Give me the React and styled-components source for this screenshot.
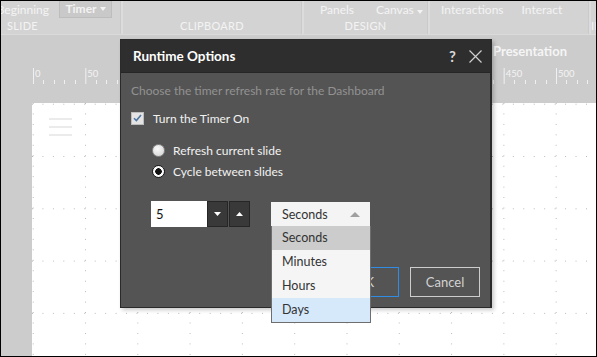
import React from 'react';
import styled, { createGlobalStyle } from 'styled-components';

const GlobalStyle = createGlobalStyle`
  html, body {
    margin: 0;
    padding: 0;
  }
  body {
    font-family: Lato, "Open Sans", sans-serif;
    background: #fff;
  }
`;

const Screen = styled.div`
  position: relative;
  width: 597px;
  height: 357px;
  box-sizing: border-box;
  border: 1px solid #000;
  overflow: hidden;
  display: flex;
  flex-direction: column;
  background: #cccccc;
`;

/* ---------- ribbon ---------- */

const Ribbon = styled.div`
  flex: none;
  height: 33px;
  display: flex;
  background: #d3d3d3;
  border-bottom: 1px solid #dadada;
  color: #f3f3f3;
  font-size: 12px;
`;

const Group = styled.div`
  flex: none;
  width: ${(p) => p.$w}px;
  margin-left: ${(p) => p.$ml || 0}px;
  display: flex;
  flex-direction: column;
`;

const Items = styled.div`
  height: 17px;
  display: flex;
  align-items: center;
  justify-content: ${(p) => p.$justify || 'flex-start'};
  gap: ${(p) => p.$gap || 0}px;
  padding: ${(p) => p.$pad || '0'};
  white-space: nowrap;
`;

const GroupLabel = styled.div`
  height: 16px;
  line-height: 16px;
  font-size: 11px;
  letter-spacing: 0.3px;
  text-align: ${(p) => p.$align || 'center'};
  white-space: nowrap;
`;

const Sep = styled.div`
  flex: none;
  width: 3px;
  background: linear-gradient(to right, #cacaca 1px, #dcdcdc 1px);
`;

const TimerButton = styled.div`
  width: 53px;
  height: 17px;
  box-sizing: border-box;
  margin-top: -1px;
  display: flex;
  align-items: center;
  justify-content: center;
  gap: 3px;
  background: #c9c9c9;
  border: 1px solid #bdbdbd;
  border-top: none;
  font-weight: 700;
`;

/* ---------- tab strip and ruler ---------- */

const TabStrip = styled.div`
  flex: none;
  height: 32px;
  display: flex;
  align-items: center;
  justify-content: flex-end;
  padding-right: 29px;
  color: #f5f5f5;
  font-size: 13px;
  font-weight: 700;
`;

const RulerBar = styled.div`
  flex: none;
  height: 34px;
`;

/* ---------- workspace ---------- */

const Workspace = styled.div`
  flex: 1;
  display: flex;
  padding-top: 2px;
`;

const Margin = styled.div`
  flex: none;
  width: 31px;
`;

const Canvas = styled.div`
  flex: 1;
  padding: 15px 0 0 17px;
  background-color: #fff;
  background-image:
    conic-gradient(from 270deg at 1px 1px, #b8b8b8 90deg, transparent 0),
    conic-gradient(from 270deg at 1px 1px, #b8b8b8 90deg, transparent 0);
  background-size: 10.46px 52.3px, 52.3px 10.46px;
  background-position: 0 53px, 53px 0;
`;

const Menu = styled.div`
  display: flex;
  flex-direction: column;
  gap: 6px;
`;

const MenuBar = styled.div`
  width: 23px;
  height: 2px;
  background: #ebebeb;
`;

/* ---------- dialog ---------- */

const Dialog = styled.div`
  position: absolute;
  left: 119px;
  top: 38px;
  width: 372px;
  height: 269px;
  box-sizing: border-box;
  border: 1px solid #2a2a2a;
  border-right-width: 2px;
  box-shadow: 2px 2px 4px rgba(0, 0, 0, 0.22);
  background: #545454;
  display: flex;
  flex-direction: column;
  z-index: 5;
`;

const TitleBar = styled.div`
  height: 32px;
  display: flex;
  align-items: center;
  padding: 0 8px 0 12px;
  background: #2e2e2e;
  border-bottom: 1px solid #262626;
`;

const Title = styled.div`
  flex: 1;
  color: #fff;
  font-size: 13.5px;
  font-weight: 700;
`;

const Help = styled.span`
  color: #d8d8d8;
  font-size: 15px;
  font-weight: 700;
  margin-right: 13px;
`;

const Body = styled.div`
  flex: 1;
  padding: 10px;
  display: flex;
  flex-direction: column;
  color: #f2f2f2;
  font-size: 12px;
`;

const Desc = styled.div`
  height: 16px;
  line-height: 16px;
  color: #929292;
`;

const CheckRow = styled.label`
  margin-top: 12px;
  height: 14px;
  display: flex;
  align-items: center;
  gap: 9px;
`;

const Box = styled.span`
  width: 13px;
  height: 13px;
  box-sizing: border-box;
  border: 1px solid #bdbdbd;
  background: #e4e4e4;
  display: flex;
  align-items: center;
  justify-content: center;
`;

const RadioGroup = styled.div`
  margin: 18px 0 0 21px;
  display: flex;
  flex-direction: column;
  gap: 7px;
`;

const RadioRow = styled.label`
  height: 14px;
  display: flex;
  align-items: center;
  gap: 8px;
`;

const Dot = styled.span`
  width: 13px;
  height: 13px;
  box-sizing: border-box;
  border-radius: 50%;
  border: 1px solid ${(p) => (p.$on ? '#1a1a1a' : '#8a8a8a')};
  background: ${(p) =>
    p.$on
      ? 'radial-gradient(circle, #111 0 3px, #fafafa 3.5px)'
      : 'radial-gradient(circle at 40% 35%, #fafafa, #cfcfcf)'};
`;

const ControlRow = styled.div`
  margin: 23px 0 0 20px;
  height: 26px;
  display: flex;
  align-items: flex-start;
  position: relative;
  z-index: 3;
`;

const NumberField = styled.div`
  width: 56px;
  height: 26px;
  box-sizing: border-box;
  background: #fff;
  color: #111;
  font-size: 13px;
  line-height: 26px;
  padding-left: 5px;
`;

const StepButton = styled.div`
  width: 21px;
  height: 26px;
  box-sizing: border-box;
  margin-left: ${(p) => p.$ml || 0}px;
  background: #393939;
  border: 1px solid #262626;
  display: flex;
  align-items: center;
  justify-content: center;
`;

const Select = styled.div`
  position: relative;
  margin: 1px 0 0 21px;
  width: 99px;
`;

const SelectHead = styled.div`
  height: 24px;
  box-sizing: border-box;
  display: flex;
  align-items: center;
  justify-content: space-between;
  padding: 0 10px 0 11px;
  background: #f4f4f4;
  color: #333;
  font-size: 12.5px;
`;

const OptionList = styled.div`
  position: absolute;
  top: 24px;
  left: 0;
  width: 100px;
  box-sizing: border-box;
  border: 1px solid #6e6e6e;
  border-top: none;
  display: flex;
  flex-direction: column;
`;

const Option = styled.div`
  height: 24px;
  line-height: 24px;
  padding-left: 10px;
  background: ${(p) => p.$bg || '#f5f5f5'};
  color: #333;
  font-size: 12.5px;
`;

const Buttons = styled.div`
  margin-top: 40px;
  display: flex;
  justify-content: flex-end;
  gap: 11px;
`;

const Button = styled.div`
  width: ${(p) => p.$w}px;
  height: 30px;
  box-sizing: border-box;
  border: 1px solid ${(p) => (p.$primary ? '#2f8de6' : '#cdcdcd')};
  color: #d2d2d2;
  font-size: 13px;
  display: flex;
  align-items: center;
  justify-content: center;
`;

const Triangle = ({ up, color = '#fff', w = 7, h = 4 }) => (
  <svg width={w} height={h} viewBox={`0 0 ${w} ${h}`}>
    <polygon
      points={up ? `0,${h} ${w / 2},0 ${w},${h}` : `0,0 ${w},0 ${w / 2},${h}`}
      fill={color}
    />
  </svg>
);

const Ruler = () => {
  const step = 52.3;
  const ticks = [];
  for (let k = 0; k <= 11; k++) {
    const x = 32 + k * step;
    ticks.push(<line key={`M${k}`} x1={x + 0.5} x2={x + 0.5} y1={1} y2={17} />);
    for (let m = 1; m < 5; m++) {
      const mx = Math.round(x + (m * step) / 5) + 0.5;
      ticks.push(<line key={`m${k}-${m}`} x1={mx} x2={mx} y1={13} y2={17} />);
    }
  }
  return (
    <svg width="595" height="34">
      <g stroke="#f0f0f0" strokeWidth="1">{ticks}</g>
      <g fill="#f3f3f3" fontSize="9.5" fontFamily="Lato, sans-serif">
        {Array.from({ length: 11 }, (_, k) => (
          <text key={k} x={34 + k * step} y={10}>
            {k * 50}
          </text>
        ))}
      </g>
    </svg>
  );
};

export default function App() {
  return (
    <>
      <GlobalStyle />
      <Screen>
        <Ribbon>
          <Group $w={195} $ml={-76}>
            <Items $justify="flex-end" $gap={10} $pad="0 8px 0 0">
              <span>From Beginning</span>
              <TimerButton>
                Timer <Triangle color="#f3f3f3" w={6} h={4} />
              </TimerButton>
            </Items>
            <GroupLabel>SLIDE</GroupLabel>
          </Group>
          <Sep />
          <Group $w={178}>
            <Items />
            <GroupLabel>CLIPBOARD</GroupLabel>
          </Group>
          <Sep />
          <Group $w={123}>
            <Items $gap={22} $pad="0 0 0 16px">
              <span>Panels</span>
              <span>
                Canvas <Triangle color="#f3f3f3" w={6} h={4} />
              </span>
            </Items>
            <GroupLabel>DESIGN</GroupLabel>
          </Group>
          <Sep />
          <Group $w={158}>
            <Items $gap={18} $pad="0 0 0 11px">
              <span>Interactions</span>
              <span>Interact</span>
            </Items>
            <GroupLabel />
          </Group>
          <Sep />
          <Group $w={80}>
            <Items />
            <GroupLabel $align="left">INSERT</GroupLabel>
          </Group>
        </Ribbon>

        <TabStrip>View Presentation</TabStrip>

        <RulerBar>
          <Ruler />
        </RulerBar>

        <Workspace>
          <Margin />
          <Canvas>
            <Menu>
              <MenuBar />
              <MenuBar />
              <MenuBar />
            </Menu>
          </Canvas>
        </Workspace>

        <Dialog>
          <TitleBar>
            <Title>Runtime Options</Title>
            <Help>?</Help>
            <svg width="13" height="13" viewBox="0 0 13 13">
              <path d="M0.5 0.5 L12.5 12.5 M12.5 0.5 L0.5 12.5" stroke="#cfcfcf" strokeWidth="1.2" />
            </svg>
          </TitleBar>
          <Body>
            <Desc>Choose the timer refresh rate for the Dashboard</Desc>
            <CheckRow>
              <Box>
                <svg width="9" height="8" viewBox="0 0 9 8">
                  <path d="M1 4.2 L3.4 6.6 L8 1" fill="none" stroke="#4f76a3" strokeWidth="1.6" />
                </svg>
              </Box>
              Turn the Timer On
            </CheckRow>
            <RadioGroup>
              <RadioRow>
                <Dot />
                Refresh current slide
              </RadioRow>
              <RadioRow>
                <Dot $on />
                Cycle between slides
              </RadioRow>
            </RadioGroup>
            <ControlRow>
              <NumberField>5</NumberField>
              <StepButton>
                <Triangle />
              </StepButton>
              <StepButton $ml={1}>
                <Triangle up />
              </StepButton>
              <Select>
                <SelectHead>
                  Seconds
                  <Triangle up color="#a0a0a0" w={10} h={5} />
                </SelectHead>
                <OptionList>
                  <Option $bg="#cccccc">Seconds</Option>
                  <Option>Minutes</Option>
                  <Option>Hours</Option>
                  <Option $bg="#d6e9fa">Days</Option>
                </OptionList>
              </Select>
            </ControlRow>
            <Buttons>
              <Button $w={69} $primary>OK</Button>
              <Button $w={70}>Cancel</Button>
            </Buttons>
          </Body>
        </Dialog>
      </Screen>
    </>
  );
}
